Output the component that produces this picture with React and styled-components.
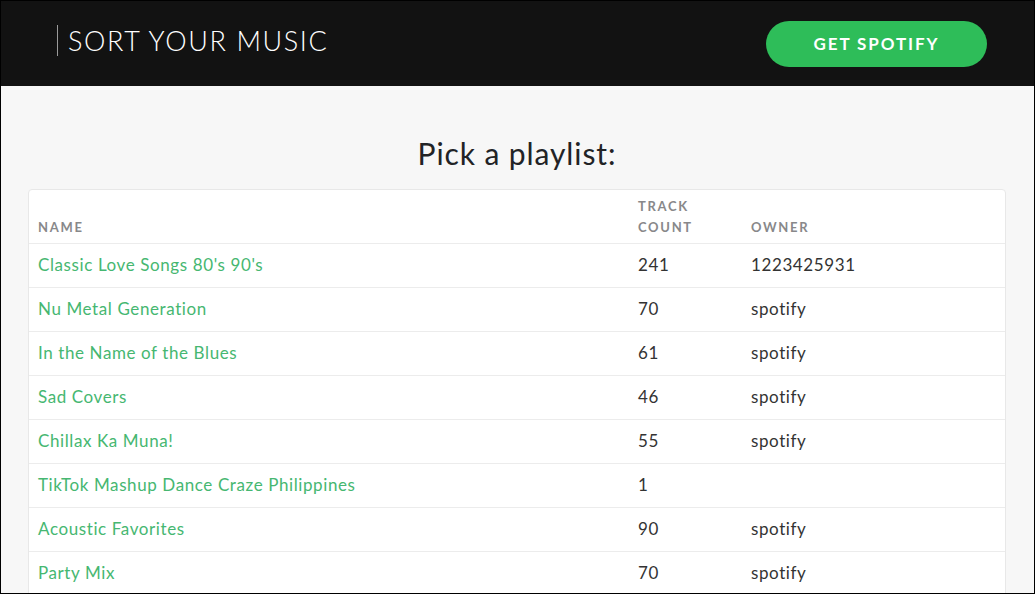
import React from 'react'
import styled, { createGlobalStyle } from 'styled-components'

const GlobalStyle = createGlobalStyle`
  html, body {
    margin: 0;
    padding: 0;
    background: #000;
  }
  * {
    box-sizing: border-box;
  }
`;

const playlists = [
  { name: "Classic Love Songs 80's 90's", count: 241, owner: '1223425931' },
  { name: 'Nu Metal Generation', count: 70, owner: 'spotify' },
  { name: 'In the Name of the Blues', count: 61, owner: 'spotify' },
  { name: 'Sad Covers', count: 46, owner: 'spotify' },
  { name: 'Chillax Ka Muna!', count: 55, owner: 'spotify' },
  { name: 'TikTok Mashup Dance Craze Philippines', count: 1, owner: '' },
  { name: 'Acoustic Favorites', count: 90, owner: 'spotify' },
  { name: 'Party Mix', count: 70, owner: 'spotify' },
];

const App = () => {
  return (
    <>
      <GlobalStyle />
      <Frame>
        <Header>
          <Brand>SORT YOUR MUSIC</Brand>
          <GetButton>GET SPOTIFY</GetButton>
        </Header>
        <Main>
          <Title>Pick a playlist:</Title>
          <Card>
            <Table>
              <thead>
                <tr>
                  <Th style={{ width: 600 }}>Name</Th>
                  <Th style={{ width: 113 }}>Track<br />Count</Th>
                  <Th>Owner</Th>
                </tr>
              </thead>
              <tbody>
                {playlists.map((p) => (
                  <tr key={p.name}>
                    <Td><PlaylistLink href="#">{p.name}</PlaylistLink></Td>
                    <Td>{p.count}</Td>
                    <Td>{p.owner}</Td>
                  </tr>
                ))}
              </tbody>
            </Table>
          </Card>
        </Main>
      </Frame>
    </>
  )
}

const Frame = styled.div`
  width: 1035px;
  height: 594px;
  border: 1px solid #000;
  background: #f7f7f7;
  overflow: hidden;
  font-family: Lato, "Noto Sans", sans-serif;
`;

const Header = styled.header`
  height: 85px;
  background: #121212;
  display: flex;
  align-items: center;
  justify-content: space-between;
  padding: 0 47px 0 56px;
`;

const Brand = styled.div`
  border-left: 1px solid #9a9a9a;
  padding: 2px 0 2px 10px;
  margin-top: -6px;
  color: #fff;
  font-size: 27px;
  font-weight: 300;
  letter-spacing: 1.6px;
  line-height: 27px;
`;

const GetButton = styled.button`
  width: 221px;
  height: 46px;
  border: none;
  border-radius: 23px;
  background: #2ebd59;
  color: #fff;
  font-family: Lato, "Noto Sans", sans-serif;
  font-size: 17px;
  font-weight: 700;
  letter-spacing: 1.9px;
  cursor: pointer;
`;

const Main = styled.main`
  padding: 48px 28px 0 27px;
`;

const Title = styled.h1`
  margin: 0 0 17px;
  text-align: center;
  font-size: 30px;
  font-weight: 400;
  letter-spacing: 0.9px;
  color: #222326;
  line-height: 38px;
`;

const Card = styled.div`
  background: #fff;
  border: 1px solid #e8e8e8;
  border-radius: 4px;
`;

const Table = styled.table`
  width: 100%;
  border-collapse: collapse;
`;

const Th = styled.th`
  text-align: left;
  vertical-align: bottom;
  padding: 6px 9px 5px;
  color: #88888a;
  font-size: 13px;
  font-weight: 700;
  letter-spacing: 1.7px;
  line-height: 21px;
  text-transform: uppercase;
  border-bottom: 1px solid #ececec;
`;

const Td = styled.td`
  padding: 0 9px 2px;
  height: 44px;
  font-size: 17px;
  letter-spacing: 0.6px;
  color: #333;
  border-bottom: 1px solid #ececec;
`;

const PlaylistLink = styled.a`
  color: #46b771;
  text-decoration: none;
`;

export default App;
